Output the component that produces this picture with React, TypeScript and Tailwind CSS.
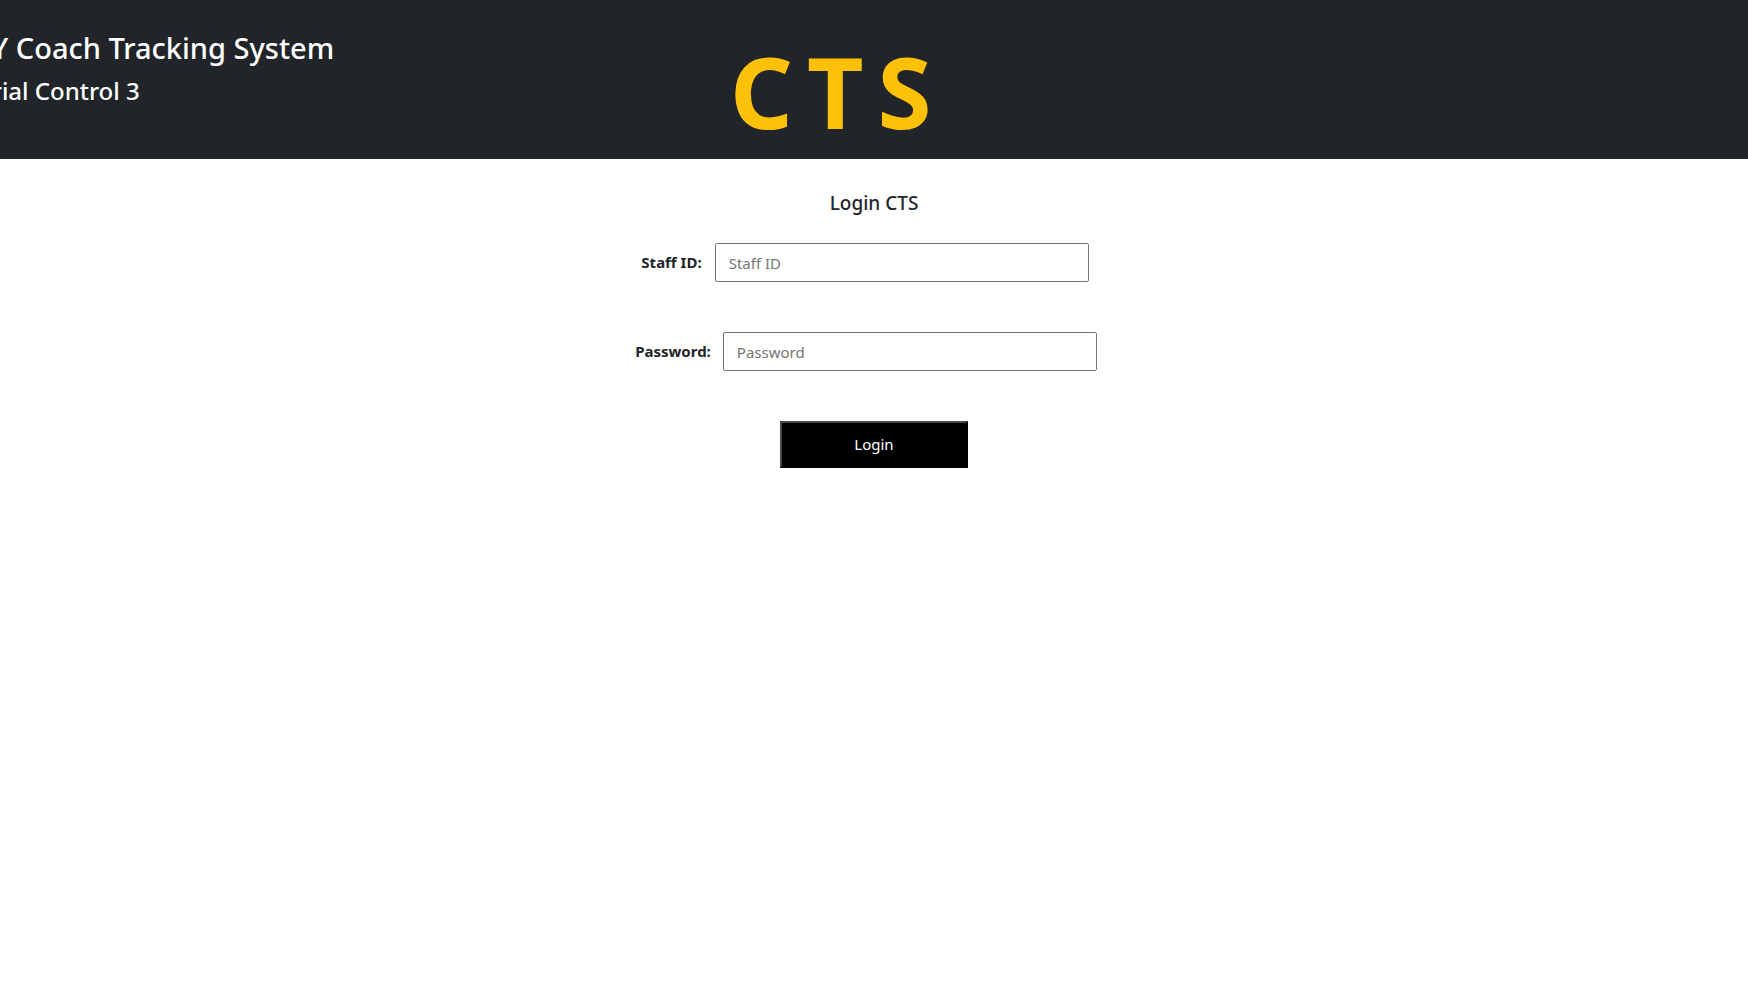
import React, { useState } from 'react';

const App: React.FC = () => {
  const [staffId, setStaffId] = useState('');
  const [password, setPassword] = useState('');

  return (
    <div className="min-h-screen bg-white font-['Noto_Sans',sans-serif] text-[#212529]">
      {/* Header */}
      <header className="h-[159px] bg-[#212529] flex items-start overflow-hidden">
        <div className="w-[730px] shrink-0 pt-[26px]">
          <h2 className="-ml-[43px] text-[29px] font-medium leading-[44px] text-white whitespace-nowrap">
            SKY Coach Tracking System
          </h2>
          <h3 className="-ml-[67px] mt-[2px] text-[24px] font-medium leading-[38px] text-white whitespace-nowrap">
            Material Control 3
          </h3>
        </div>
        <div className="pt-[36px] text-[98px] font-bold leading-[110px] tracking-[14px] text-[#ffc107]">
          CTS
        </div>
      </header>

      {/* Login form */}
      <main className="flex flex-col items-center pt-[30px]">
        <h4 className="text-[19px] font-medium leading-[28px]">Login CTS</h4>

        <div className="mt-[26px] flex items-center gap-[13px] -translate-x-[9px]">
          <label className="text-[15px] font-bold">Staff ID:</label>
          <input
            type="text"
            value={staffId}
            onChange={e => setStaffId(e.target.value)}
            placeholder="Staff ID"
            className="w-[374px] h-[39px] px-[13px] border border-[#767676] rounded-[2px] text-[15px] placeholder:text-[#757575] outline-none"
          />
        </div>

        <div className="mt-[50px] flex items-center gap-[12px] -translate-x-[8px]">
          <label className="text-[15px] font-bold">Password:</label>
          <input
            type="password"
            value={password}
            onChange={e => setPassword(e.target.value)}
            placeholder="Password"
            className="w-[374px] h-[39px] px-[13px] border border-[#767676] rounded-[2px] text-[15px] placeholder:text-[#757575] outline-none"
          />
        </div>

        <button className="mt-[50px] w-[188px] h-[47px] bg-black text-white text-[15px] border-2 border-t-[#4a4a4a] border-l-[#4a4a4a] border-r-black border-b-black">
          Login
        </button>
      </main>
    </div>
  );
};

export default App;
